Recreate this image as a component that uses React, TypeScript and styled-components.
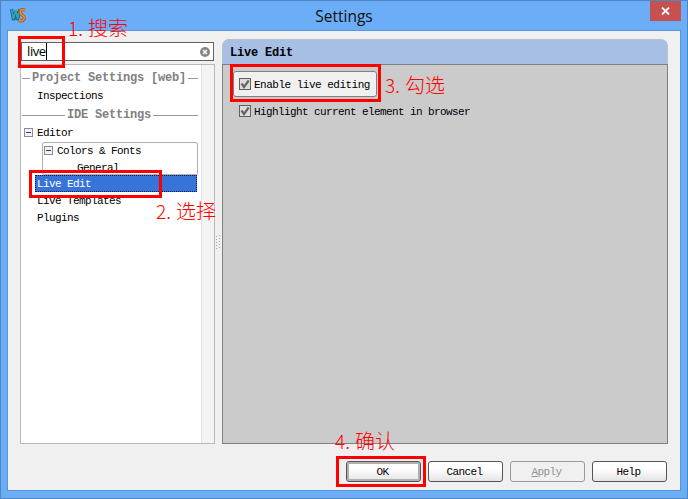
import React from "react";
import styled, { createGlobalStyle, css } from "styled-components";

const GlobalStyle = createGlobalStyle`
  *, *::before, *::after { box-sizing: border-box; }
  body { margin: 0; overflow: hidden; }
`;

const Window = styled.div`
  position: relative;
  width: 688px;
  height: 499px;
  display: flex;
  flex-direction: column;
  padding: 0 6px 7px;
  background: #6badf6;
  border: 1px solid #4e86c4;
  font: 11px/17px "Liberation Mono", monospace;
  letter-spacing: -0.6px;
  color: #000;
`;

const TitleBar = styled.header`
  flex: none;
  height: 29px;
  display: grid;
  grid-template-columns: 31px 1fr 31px;
  align-items: start;
`;

const Logo = styled.svg`
  margin: 6px 0 0 3px;
`;

const Title = styled.h1`
  margin: 0;
  text-align: center;
  font: 400 15.5px/30px "Open Sans", sans-serif;
  letter-spacing: 0;
  color: #101010;
`;

const CloseButton = styled.button`
  width: 31px;
  height: 20px;
  padding: 0;
  border: 0;
  display: grid;
  place-items: center;
  background: #c75050;
`;

const Client = styled.main`
  flex: 1;
  min-height: 0;
  border: 1px solid #5a94d8;
  background: #f0f0f0;
  padding: 8px 12px 0;
`;

const Columns = styled.div`
  display: grid;
  grid-template-columns: 195px 7px 446px;
  height: 405px;
`;

const Sidebar = styled.section`
  display: flex;
  flex-direction: column;
  padding-top: 3px;
`;

const SearchField = styled.label`
  flex: none;
  width: 193px;
  height: 19px;
  margin: 0 0 3px 1px;
  padding: 0 3px 0 5px;
  border: 1px solid #606060;
  background: #fff;
  display: flex;
  align-items: center;
  justify-content: space-between;
`;

const Query = styled.span`
  font: 13px/17px "Open Sans", sans-serif;
  letter-spacing: -0.4px;
  border-right: 1px solid #000;
`;

const TreeFrame = styled.div`
  flex: 1;
  display: grid;
  grid-template-columns: 180px 13px;
  border: 1px solid #b9b9b9;
  background: #fff;
`;

const Tree = styled.div`
  padding-top: 3px;
`;

const Gutter = styled.div`
  background: #f4f4f4;
  border-left: 1px solid #e2e2e2;
`;

const GroupTitle = styled.div<{ $lead: number }>`
  display: grid;
  grid-template-columns: ${(p) => p.$lead}px auto 1fr;
  align-items: center;
  gap: 2px;
  height: 20px;
  padding: 0 3px 0 1px;
  font-weight: 700;
  font-size: 12px;
  letter-spacing: -0.2px;
  color: #808080;
  white-space: pre;
  &::before, &::after { content: ""; height: 1px; background: #999; }
`;

const Row = styled.div<{ $indent: number; $selected?: boolean }>`
  display: flex;
  align-items: center;
  gap: 4px;
  height: 17px;
  padding-left: ${(p) => p.$indent}px;
  white-space: pre;
  ${(p) =>
    p.$selected &&
    css`
      margin: 0 4px 1px 14px;
      padding-top: 2px;
      background: #3874d8;
      color: #fff;
      outline: 1px dotted #0a1a50;
      outline-offset: -1px;
    `}
`;

const Nested = styled.div`
  width: 156px;
  height: 33px;
  margin-left: 21px;
  border: 1px solid #b0b0b0;
  border-radius: 2px;
  overflow: hidden;
`;

const Toggle = styled.i`
  flex: none;
  width: 9px;
  height: 9px;
  margin-bottom: 2px;
  border: 1px solid #8c8c8c;
  background: #f2f2f2;
  display: grid;
  place-items: center;
  &::after { content: ""; width: 5px; height: 1px; background: #20408c; }
`;

const Splitter = styled.div`
  display: flex;
  align-items: center;
`;

const Panel = styled.section`
  display: flex;
  flex-direction: column;
`;

const PanelTitle = styled.h2`
  margin: 0;
  height: 25px;
  padding-left: 7px;
  border: 1px solid #b8c0cc;
  border-bottom: 0;
  border-radius: 7px 7px 0 0;
  background: #a7bee5;
  font: 700 12px/26px "Liberation Mono", monospace;
  letter-spacing: -0.2px;
`;

const PanelBody = styled.div`
  flex: 1;
  padding: 6px 0 0 10px;
  border: 1px solid #808080;
  background: #cbcbcb;
`;

const CheckRow = styled.label<{ $boxed?: boolean }>`
  display: flex;
  align-items: center;
  gap: 3px;
  white-space: pre;
  height: 28px;
  padding: 3px 0 0 6px;
  ${(p) =>
    p.$boxed &&
    css`
      width: 144px;
      height: 26px;
      border: 1px solid #808080;
      border-radius: 3px;
      padding-left: 5px;
      background: #f0f0f0;
      letter-spacing: -0.5px;
    `}
`;

const CheckMark = styled.svg`
  flex: none;
  margin-bottom: 4px;
`;

const Footer = styled.footer`
  display: flex;
  justify-content: flex-end;
  gap: 7px;
  margin: 17px 1px 0 0;
`;

const Button = styled.button<{ $primary?: boolean }>`
  width: 75px;
  height: 21px;
  padding: 2px 2px 0 0;
  border: 1px solid #555;
  border-radius: 3px;
  background: linear-gradient(#fff 35%, #e4e4e4);
  font: inherit;
  letter-spacing: inherit;
  color: #000;
  ${(p) => p.$primary && css`box-shadow: inset 0 0 0 2px #b0b0b0;`}
  &:disabled {
    border-color: #999;
    background: #f0f0f0;
    color: #949494;
  }
`;

const Highlight = styled.div<{ $x: number; $y: number; $w: number; $h: number }>`
  position: absolute;
  left: ${(p) => p.$x - 1}px;
  top: ${(p) => p.$y - 1}px;
  width: ${(p) => p.$w}px;
  height: ${(p) => p.$h}px;
  border: 3px solid #f00;
  pointer-events: none;
`;

const Note = styled.div<{ $x: number; $y: number }>`
  position: absolute;
  left: ${(p) => p.$x - 1}px;
  top: ${(p) => p.$y - 2}px;
  display: flex;
  font: 300 20px/22px "Noto Sans CJK SC", sans-serif;
  letter-spacing: 0;
  color: #f00;
  white-space: nowrap;
`;

const Digits = styled.span`
  width: 20px;
  font-size: 19px;
`;

const CheckBox = () => (
  <CheckMark width="12" height="12" viewBox="0 0 12 12">
    <rect x=".5" y=".5" width="11" height="11" fill="#dcdcdc" stroke="#606060" />
    <path d="M2.5 5.5 5 9 9.7 2.5" fill="none" stroke="#666" strokeWidth="2.2" />
  </CheckMark>
);

const notes = [
  { x: 68, y: 18, n: "1.", text: "搜索" },
  { x: 156, y: 201, n: "2.", text: "选择" },
  { x: 385, y: 75, n: "3.", text: "勾选" },
  { x: 335, y: 431, n: "4.", text: "确认" },
];

const highlights = [
  { x: 18, y: 36, w: 47, h: 32 },
  { x: 29, y: 170, w: 133, h: 28 },
  { x: 230, y: 64, w: 151, h: 38 },
  { x: 336, y: 456, w: 90, h: 31 },
];

export default function App() {
  return (
    <Window>
      <GlobalStyle />
      <TitleBar>
        <Logo width="17" height="17" viewBox="0 0 17 17" fill="none">
          <path d="M1.5 2 3.5 13 6 4 7.5 13 10 2" stroke="#17667c" strokeWidth="3.2" />
          <path d="M1.5 2 3.5 12 6 3 7.5 12 10 2" stroke="#31a5c0" strokeWidth="1.6" />
          <path d="M15 3C11 1.5 9 4 11 7c3 2 4 3 3 5-1 2-3 2.5-5 1" stroke="#a8541c" strokeWidth="3.2" />
          <path d="M15 3C11 1.5 9 4 11 7c3 2 4 3 3 5-1 2-3 2.5-5 1" stroke="#ee8a35" strokeWidth="1.6" />
        </Logo>
        <Title>Settings</Title>
        <CloseButton aria-label="Close">
          <svg width="9" height="8" viewBox="0 0 9 8">
            <path d="M1 .5 8 7.5M8 .5 1 7.5" stroke="#fff" strokeWidth="1.8" />
          </svg>
        </CloseButton>
      </TitleBar>
      <Client>
        <Columns>
          <Sidebar>
            <SearchField>
              <Query>live</Query>
              <svg width="10" height="10" viewBox="0 0 10 10">
                <circle cx="5" cy="5" r="5" fill="#858585" />
                <path d="m3 3 4 4m0-4-4 4" stroke="#fff" strokeWidth="1.5" />
              </svg>
            </SearchField>
            <TreeFrame>
              <Tree>
                <GroupTitle $lead={8}>Project Settings [web]</GroupTitle>
                <Row $indent={16}>Inspections</Row>
                <GroupTitle $lead={43}>IDE Settings</GroupTitle>
                <Row $indent={3}><Toggle />Editor</Row>
                <Nested>
                  <Row $indent={1}><Toggle />Colors &amp; Fonts</Row>
                  <Row $indent={34}>General</Row>
                </Nested>
                <Row $indent={2} $selected>Live Edit</Row>
                <Row $indent={16}>Live Templates</Row>
                <Row $indent={16}>Plugins</Row>
              </Tree>
              <Gutter />
            </TreeFrame>
          </Sidebar>
          <Splitter>
            <svg width="6" height="14" viewBox="0 0 6 14">
              <path d="M1.5 1v13M4.5 0v14" stroke="#aaa" strokeDasharray="1 2" />
            </svg>
          </Splitter>
          <Panel>
            <PanelTitle>Live Edit</PanelTitle>
            <PanelBody>
              <CheckRow $boxed><CheckBox />Enable live editing</CheckRow>
              <CheckRow><CheckBox />Highlight current element in browser</CheckRow>
            </PanelBody>
          </Panel>
        </Columns>
        <Footer>
          <Button $primary>OK</Button>
          <Button>Cancel</Button>
          <Button disabled><u>A</u>pply</Button>
          <Button>Help</Button>
        </Footer>
      </Client>
      {highlights.map((h) => (
        <Highlight key={h.y} $x={h.x} $y={h.y} $w={h.w} $h={h.h} />
      ))}
      {notes.map((t) => (
        <Note key={t.n} $x={t.x} $y={t.y}><Digits>{t.n}</Digits>{t.text}</Note>
      ))}
    </Window>
  );
}
